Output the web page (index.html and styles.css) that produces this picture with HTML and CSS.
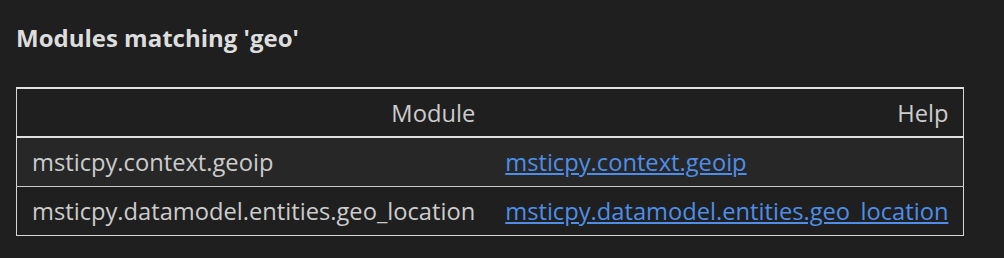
FILE: index.html
```html
<!DOCTYPE html>
<html lang="en">

<head>
    <meta charset="UTF-8">
    <meta name="viewport" content="width=device-width, initial-scale=1.0">
    <title>Modules matching 'geo'</title>
    <link rel="stylesheet" href="styles.css">
</head>

<body>
    <div class="output">
        <h2 class="title">Modules matching 'geo'</h2>
        <table class="modules">
            <thead>
                <tr>
                    <th>Module</th>
                    <th>Help</th>
                </tr>
            </thead>
            <tbody>
                <tr>
                    <td>msticpy.context.geoip</td>
                    <td><a href="#">msticpy.context.geoip</a></td>
                </tr>
                <tr>
                    <td>msticpy.datamodel.entities.geo_location</td>
                    <td><a href="#">msticpy.datamodel.entities.geo_location</a></td>
                </tr>
            </tbody>
        </table>
    </div>
</body>

</html>
```
FILE: styles.css
```css
body {
    margin: 0;
    background-color: #1f1f1f;
    color: #cccccc;
    font-family: "Open Sans", Arial, sans-serif;
}

.output {
    padding: 22px 16px;
}

.title {
    margin: 0;
    font-size: 24px;
    line-height: 32px;
    font-weight: bold;
    color: #dddddd;
}

.modules {
    margin-top: 33px;
    border-collapse: collapse;
    border: 1px solid #d6d6d6;
    border-top: 2px solid #e0e0e0;
    font-size: 23.7px;
    line-height: 32px;
}

.modules th {
    font-weight: normal;
    text-align: right;
    padding: 8px 15px 7px;
    border-bottom: 2px solid #e0e0e0;
}

.modules td {
    text-align: left;
    padding: 8px 15px;
    border-top: 1px solid #c8c8c8;
}

.modules tbody tr:nth-child(odd) {
    background-color: #272727;
}

.modules a {
    color: #4e8ee8;
    text-decoration: underline;
}
```
